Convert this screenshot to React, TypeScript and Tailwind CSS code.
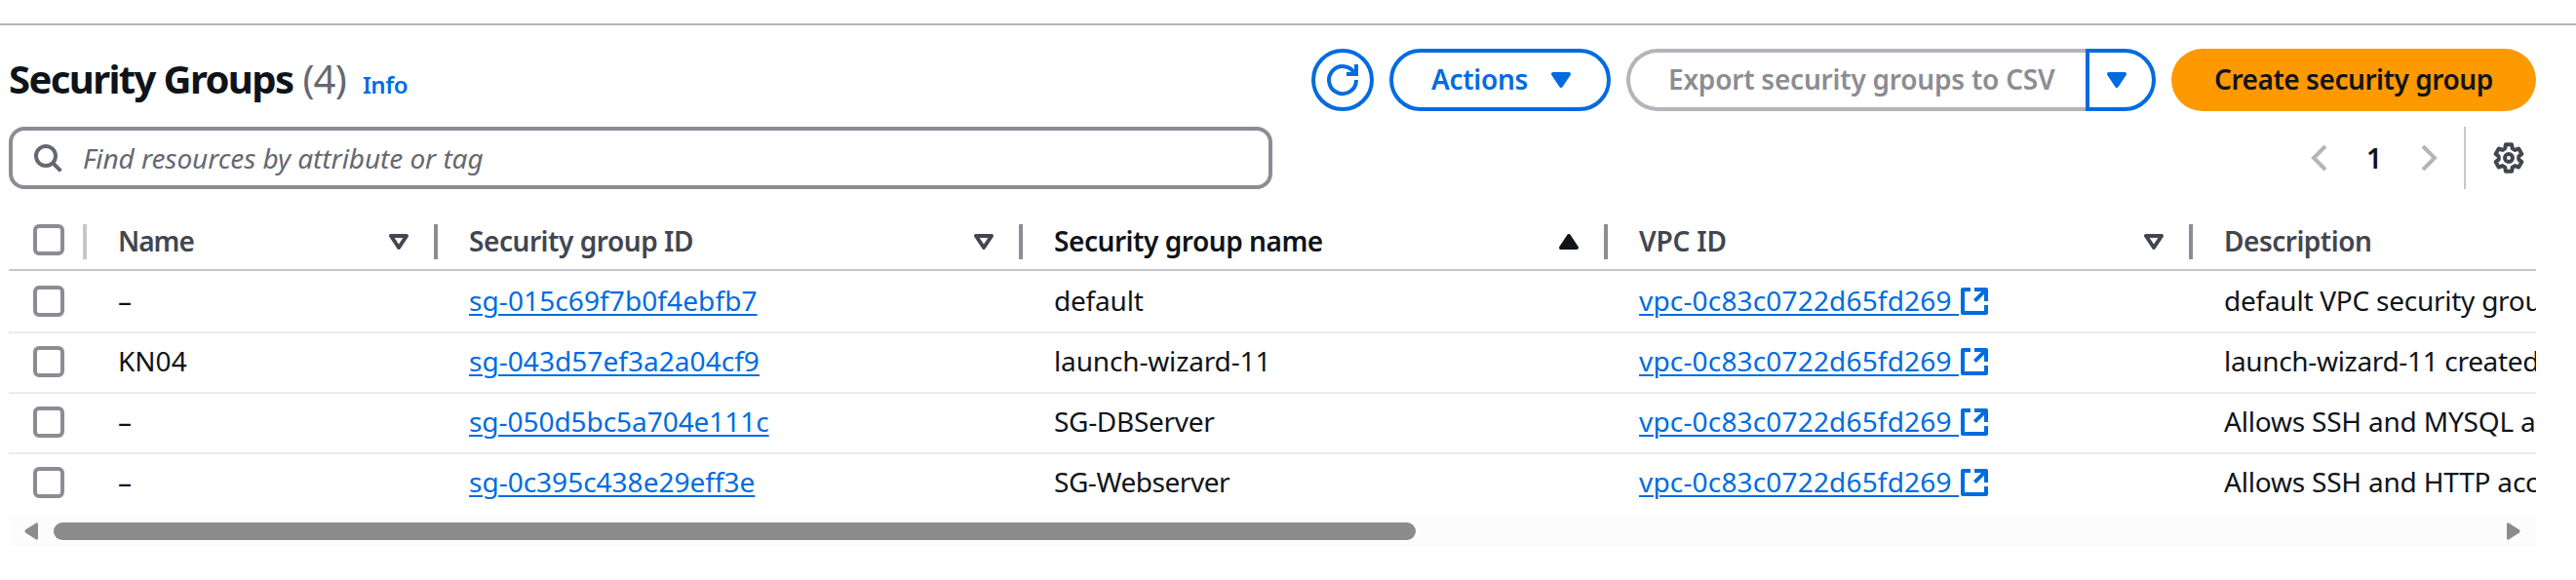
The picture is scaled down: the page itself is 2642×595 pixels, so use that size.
import type { ReactNode } from 'react';

function Icon({ className = '', children }: { className?: string; children: ReactNode }) {
  return (
    <svg viewBox="0 0 16 16" fill="none" stroke="currentColor" strokeWidth="2" className={`h-8 w-8 shrink-0 overflow-visible ${className}`}>
      {children}
    </svg>
  );
}

const CaretDown = ({ className = '' }: { className?: string }) => (
  <Icon className={className}>
    <path d="M4 5h8l-4 6z" fill="currentColor" strokeLinejoin="round" />
  </Icon>
);

const SortIcon = ({ active }: { active?: boolean }) =>
  active ? (
    <Icon className="text-[#0f141a]">
      <path d="M4 11h8L8 5z" fill="currentColor" strokeLinejoin="round" />
    </Icon>
  ) : (
    <Icon>
      <path d="M4 5h8l-4 6z" strokeLinejoin="round" />
    </Icon>
  );

const ExternalIcon = () => (
  <Icon>
    <path d="M8 2h6v6M14 2 8.2 7.8M14 10v4H2V2h4" strokeLinejoin="round" />
  </Icon>
);

const Checkbox = () => <span className="h-8 w-8 shrink-0 rounded-[6px] border-4 border-[#8c8c94] bg-white" />;

const grid = 'grid grid-cols-[80px_360px_600px_600px_600px_600px]';

const columns = [
  { label: 'Name', track: 'tracking-[-1px]' },
  { label: 'Security group ID', track: 'tracking-[-0.45px]' },
  { label: 'Security group name', track: 'tracking-[-0.45px]', active: true },
  { label: 'VPC ID', track: 'tracking-[-0.2px]' },
  { label: 'Description', track: 'tracking-[-0.5px]' },
];

const rows = [
  { name: '–', id: 'sg-015c69f7b0f4ebfb7', idTrack: 'tracking-[0.1px]', group: 'default', groupTrack: 'tracking-[-0.2px]', text: 'default VPC security group', textTrack: 'tracking-[-0.25px]' },
  { name: 'KN04', id: 'sg-043d57ef3a2a04cf9', idTrack: 'tracking-[0.05px]', group: 'launch-wizard-11', groupTrack: 'tracking-[-0.15px]', text: 'launch-wizard-11 created 2024', textTrack: 'tracking-[-0.33px]' },
  { name: '–', id: 'sg-050d5bc5a704e111c', idTrack: 'tracking-[-0.05px]', group: 'SG-DBServer', groupTrack: 'tracking-[-0.3px]', text: 'Allows SSH and MYSQL access', textTrack: 'tracking-[-0.2px]' },
  { name: '–', id: 'sg-0c395c438e29eff3e', idTrack: 'tracking-normal', group: 'SG-Webserver', groupTrack: 'tracking-[-0.45px]', text: 'Allows SSH and HTTP access', textTrack: 'tracking-[-0.2px]' },
];

const link = 'text-[#006ce0] underline decoration-2 underline-offset-[3px]';

export default function App() {
  return (
    <div className="h-[595px] w-full overflow-hidden bg-white pt-6 font-['Noto_Sans',sans-serif] text-[28px] leading-[40px] text-[#0f141a]">
      <div className="border-t-2 border-[#b4b4bb] pt-6 pr-[41px] pl-[9px]">
        <header className="flex h-16 items-center">
          <div className="flex items-baseline pb-px whitespace-nowrap">
            <h1 className="text-[40px] font-bold tracking-[-1.6px]">Security Groups</h1>
            <span className="ml-[10px] text-[40px] tracking-[-0.8px] text-[#656871]">(4)</span>
            <a className="ml-[17px] text-2xl font-semibold tracking-[-0.4px] text-[#006ce0]">Info</a>
          </div>
          <div className="ml-auto flex font-semibold whitespace-nowrap">
            <button className="flex h-16 w-16 items-center justify-center rounded-full border-4 border-[#006ce0] text-[#006ce0]">
              <Icon>
                <path d="M10 5h5V0M15 8a7 7 0 1 1-.7-3" />
              </Icon>
            </button>
            <button className="ml-4 flex h-16 w-[227px] items-center justify-between rounded-full border-4 border-[#006ce0] pr-[31px] pl-[39px] text-[#006ce0]">
              <span className="pb-[3px] tracking-[-0.3px]">Actions</span>
              <CaretDown />
            </button>
            <div className="ml-4 flex">
              <button className="flex h-16 w-[471px] items-center rounded-l-full border-4 border-r-0 border-[#b4b4bb] pl-[39px] text-[#8c8c94]">
                <span className="pb-[3px] tracking-[-0.22px]">Export security groups to CSV</span>
              </button>
              <button className="flex h-16 w-[72px] items-center rounded-r-full border-4 border-[#006ce0] pl-3 text-[#006ce0]">
                <CaretDown />
              </button>
            </div>
            <button className="ml-4 flex h-16 w-[374px] items-center rounded-full bg-[#ff9900] pl-11">
              <span className="pb-[3px] tracking-[-0.45px]">Create security group</span>
            </button>
          </div>
        </header>

        <div className="mt-4 flex h-16 items-center">
          <div className="flex h-16 w-[1296px] items-center rounded-2xl border-4 border-[#8c8c94] pl-5 text-[#656871]">
            <Icon>
              <circle cx="7" cy="7" r="5" />
              <path d="m10.5 10.5 4.2 4.2" />
            </Icon>
            <span className="ml-5 pb-px tracking-[-0.07px] italic">Find resources by attribute or tag</span>
          </div>
          <div className="ml-auto flex h-16 items-center">
            <Icon className="text-[#b4b4bb]">
              <path d="M11 2 5 8l6 6" />
            </Icon>
            <span className="w-20 pb-px text-center font-semibold">1</span>
            <Icon className="text-[#b4b4bb]">
              <path d="m5 2 6 6-6 6" />
            </Icon>
            <span className="ml-5 h-16 w-0.5 bg-[#c6c6cd]" />
            <Icon className="mr-3 ml-7 text-[#424650]">
              <path
                strokeLinejoin="round"
                d="M6.43 1.18 9.57 1.18 9.86 3.15 11.27 3.96 13.12 3.23 14.69 5.95 13.14 7.19 13.14 8.81 14.69 10.05 13.12 12.77 11.27 12.04 9.86 12.85 9.57 14.82 6.43 14.82 6.14 12.85 4.73 12.04 2.88 12.77 1.31 10.05 2.86 8.81 2.86 7.19 1.31 5.95 2.88 3.23 4.73 3.96 6.14 3.15z"
              />
              <circle cx="8" cy="8" r="2" />
            </Icon>
          </div>
        </div>

        <div className="mt-[26px] overflow-hidden whitespace-nowrap">
          <div className={`${grid} h-[58px] border-b-2 border-[#c6c6cd] font-semibold text-[#424650]`}>
            <div className="flex items-center justify-between pl-4">
              <span className="flex pl-[9px] pb-1">
                <Checkbox />
              </span>
              <span className="h-9 w-1 bg-[#c6c6cd]" />
            </div>
            {columns.map((c) => (
              <div key={c.label} className="flex items-center pl-8">
                <span className={`pb-[3px] ${c.track} ${c.active ? 'text-[#0f141a]' : ''}`}>{c.label}</span>
                <span className="mr-5 ml-auto flex">
                  <SortIcon active={c.active} />
                </span>
                <span className="h-9 w-1 bg-[#8c8c94]" />
              </div>
            ))}
          </div>
          {rows.map((r, i) => (
            <div key={r.id} className={`${grid} h-[62px] items-center ${i > 0 ? 'shadow-[inset_0_2px_0_#ebebf0]' : ''}`}>
              <div className="flex pl-[25px]">
                <Checkbox />
              </div>
              <div className="pb-[2px] pl-8">{r.name}</div>
              <div className="pb-[2px] pl-8">
                <a className={`${link} ${r.idTrack}`}>{r.id}</a>
              </div>
              <div className={`pb-[2px] pl-8 ${r.groupTrack}`}>{r.group}</div>
              <div className="flex items-center pl-8 text-[#006ce0]">
                <a className={`${link} pb-[2px] tracking-[0.17px] whitespace-pre`}>{'vpc-0c83c0722d65fd269 '}</a>
                <ExternalIcon />
              </div>
              <div className={`pb-[2px] pl-8 ${r.textTrack}`}>{r.text}</div>
            </div>
          ))}
        </div>

        <div className="mt-1 flex h-[30px] items-center bg-[#fcfcfc] text-[#8b8b8b]">
          <svg viewBox="0 0 14 18" fill="currentColor" className="ml-4 h-[18px] w-[14px]">
            <path d="M12 .4Q14-.4 14 2v14q0 2.400-2 1.600L1.500 10.800Q-.5 9 1.500 7.200z" />
          </svg>
          <span className="ml-4 h-[18px] w-[1397px] rounded-full bg-[#8b8b8b]" />
          <svg viewBox="0 0 14 18" fill="currentColor" className="mr-4 ml-auto h-[18px] w-[14px]">
            <path d="M2 .4Q0-.4 0 2v14q0 2.400 2 1.600L12.500 10.800q2-1.800 0-3.600z" />
          </svg>
        </div>
      </div>
    </div>
  );
}
